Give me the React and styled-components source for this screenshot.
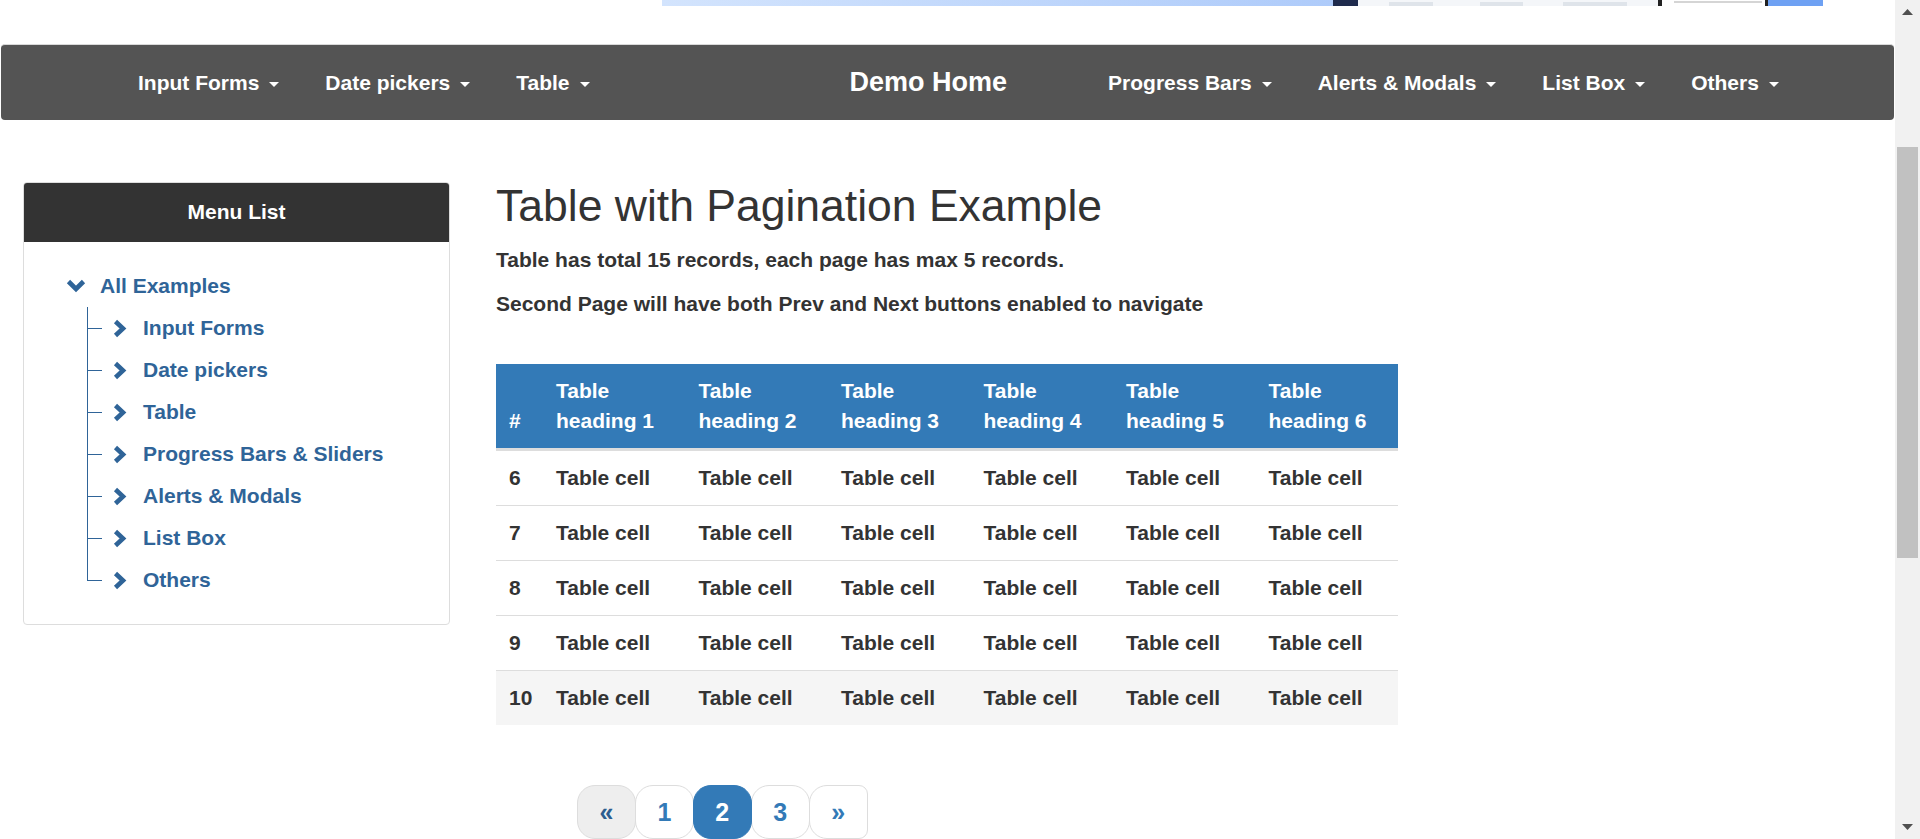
import React from 'react';
import styled, { createGlobalStyle } from 'styled-components';

const GlobalStyle = createGlobalStyle`
    html, body {
        margin: 0;
        padding: 0;
        overflow: hidden;
    }
    body {
        font-family: "Liberation Sans", Arial, Helvetica, sans-serif;
        color: #333;
        background: #fff;
    }
    * {
        box-sizing: border-box;
    }
`;

const Page = styled.div`
    display: flex;
    width: 1920px;
    height: 839px;
    overflow: hidden;
`;

const Main = styled.div`
    width: 1895px;
    height: 839px;
    overflow: hidden;
`;

const BannerStrip = styled.svg`
    display: block;
    margin-left: 662px;
`;

const Navbar = styled.nav`
    display: flex;
    align-items: stretch;
    margin: 38px 0 0 1px;
    width: 1893px;
    height: 76px;
    border-top: 1px solid #d9d9d9;
    border-radius: 4px;
    background: #545454;
`;

const NavGroup = styled.ul`
    display: flex;
    margin: 0;
    padding: 0;
    padding-left: ${p => p.$offset}px;
    list-style: none;
`;

const NavItem = styled.li`
    display: flex;
    align-items: center;
    padding: 0 23px;
    font-size: 21px;
    font-weight: bold;
    color: #fff;
    white-space: nowrap;
`;

const Caret = styled.span`
    display: inline-block;
    width: 0;
    height: 0;
    margin: 3px 0 0 10px;
    border-top: 5px solid #fff;
    border-left: 5px solid transparent;
    border-right: 5px solid transparent;
`;

const Brand = styled.div`
    display: flex;
    align-items: center;
    margin-left: 237px;
    margin-right: 78px;
    font-size: 27px;
    font-weight: bold;
    color: #fff;
    white-space: nowrap;
`;

const Content = styled.div`
    display: flex;
    align-items: flex-start;
    padding: 61px 0 0 23px;
`;

const Panel = styled.div`
    width: 427px;
    margin-top: 1px;
    border: 1px solid #ddd;
    border-radius: 4px;
    overflow: hidden;
`;

const PanelHeader = styled.div`
    height: 60px;
    margin: -1px -1px 0;
    display: flex;
    align-items: center;
    justify-content: center;
    background: #333;
    color: #fff;
    font-size: 21px;
    font-weight: bold;
    border-radius: 4px 4px 0 0;
`;

const Tree = styled.ul`
    margin: 0;
    padding: 23px 0 23px 42px;
    list-style: none;
`;

const TreeRoot = styled.li`
    color: #2f6498;
    font-size: 21px;
    font-weight: bold;
`;

const TreeLabel = styled.div`
    display: flex;
    align-items: center;
    height: 42px;
    gap: ${p => p.$gap}px;
    white-space: nowrap;
`;

const SubTree = styled.ul`
    margin: 0 0 0 21px;
    padding: 0;
    list-style: none;
`;

const Leaf = styled.li`
    position: relative;
    padding-left: 26px;

    &::before {
        content: '';
        position: absolute;
        left: 0;
        top: 0;
        height: ${p => (p.$last ? '50%' : '100%')};
        border-left: 1px solid #2f6498;
    }

    &::after {
        content: '';
        position: absolute;
        left: 0;
        top: 50%;
        width: 15px;
        border-top: 1px solid #2f6498;
    }
`;

const Article = styled.section`
    margin-left: 46px;
    width: 902px;
`;

const Title = styled.h1`
    margin: 0 0 15px;
    font-size: 44.5px;
    line-height: 49px;
    font-weight: normal;
    color: #333;
    white-space: nowrap;
`;

const Note = styled.p`
    margin: 0 0 14px;
    font-size: 21px;
    line-height: 30px;
    font-weight: bold;
    white-space: nowrap;
`;

const Table = styled.table`
    margin-top: 45px;
    width: 902px;
    table-layout: fixed;
    border-collapse: separate;
    border-spacing: 0;
    font-size: 21px;
    line-height: 30px;
    font-weight: bold;
`;

const Th = styled.th`
    padding: 12px 13px 12px;
    background: #337ab7;
    color: #fff;
    text-align: left;
    vertical-align: bottom;
    border-bottom: 3px solid #ddd;
`;

const Row = styled.tr`
    background: ${p => (p.$shade ? '#f5f5f5' : 'transparent')};
`;

const Td = styled.td`
    padding: 12px 13px;
    border-top: ${p => (p.$first ? '0' : '1px solid #ddd')};
    white-space: nowrap;
    color: #333;
`;

const Pager = styled.ul`
    display: flex;
    margin: 60px 0 0 81px;
    padding: 0;
    list-style: none;
`;

const PageLink = styled.li`
    position: relative;
    z-index: ${p => (p.$active ? 2 : 1)};
    margin-left: ${p => (p.$first ? '0' : '-1px')};
    padding: 11px 21.5px;
    font-size: 25px;
    line-height: 30px;
    font-weight: bold;
    border: 1px solid ${p => (p.$active ? '#337ab7' : '#ddd')};
    border-radius: ${p => (p.$end ? '18px 9px 9px 18px' : '18px')};
    background: ${p => (p.$active ? '#337ab7' : p.$muted ? '#eee' : '#fff')};
    color: ${p => (p.$active ? '#fff' : p.$muted ? '#2c5d8f' : '#337ab7')};
`;

const ScrollTrack = styled.div`
    display: flex;
    flex-direction: column;
    align-items: center;
    width: 25px;
    height: 839px;
    background: #f1f1f1;
`;

const ScrollButton = styled.div`
    display: flex;
    align-items: center;
    justify-content: center;
    width: 25px;
    height: 24px;
`;

const Thumb = styled.div`
    width: 21px;
    height: 411px;
    margin-top: 123px;
    background: #c1c1c1;
`;

const Spacer = styled.div`
    flex: 1;
`;

const ChevronRight = () => (
    <svg width="14" height="19" viewBox="0 0 14 19">
        <polyline points="2.5,2.5 10,9.5 2.5,16.5" fill="none" stroke="#2f6498" strokeWidth="4.6" strokeLinejoin="miter" />
    </svg>
);

const ChevronDown = () => (
    <svg width="20" height="14" viewBox="0 0 20 14">
        <polyline points="2.5,2.5 10,10 17.5,2.5" fill="none" stroke="#2f6498" strokeWidth="4.6" strokeLinejoin="miter" />
    </svg>
);

const Banner = () => (
    <BannerStrip width="1161" height="6" viewBox="0 0 1161 6">
        <defs>
            <linearGradient id="bannerSky" x1="0" x2="1" y1="0" y2="0">
                <stop offset="0" stopColor="#d3e4fd" />
                <stop offset="1" stopColor="#aecbfa" />
            </linearGradient>
        </defs>
        <rect x="0" y="0" width="671" height="6" fill="url(#bannerSky)" />
        <rect x="671" y="0" width="25" height="6" fill="#1f2b4d" />
        <rect x="696" y="0" width="300" height="6" fill="#f4f6f9" />
        <rect x="727" y="2" width="44" height="4" fill="#dfe4ea" />
        <rect x="818" y="2" width="43" height="4" fill="#dfe4ea" />
        <rect x="901" y="2" width="64" height="4" fill="#dfe4ea" />
        <rect x="996" y="0" width="4" height="6" fill="#222" />
        <rect x="1000" y="0" width="103" height="6" fill="#fff" />
        <rect x="1012" y="1" width="88" height="2" fill="#d5d5d5" />
        <rect x="1103" y="0" width="3" height="6" fill="#222" />
        <rect x="1106" y="0" width="55" height="6" fill="#6ea1f3" />
    </BannerStrip>
);

const leftMenu = ['Input Forms', 'Date pickers', 'Table'];
const rightMenu = ['Progress Bars', 'Alerts & Modals', 'List Box', 'Others'];
const treeItems = ['Input Forms', 'Date pickers', 'Table', 'Progress Bars & Sliders', 'Alerts & Modals', 'List Box', 'Others'];
const rows = [6, 7, 8, 9, 10];

const App = () => {
    return (
        <Page>
            <GlobalStyle />
            <Main>
                <Banner />
                <Navbar>
                    <NavGroup $offset={114}>
                        {leftMenu.map(item => (
                            <NavItem key={item}>{item}<Caret /></NavItem>
                        ))}
                    </NavGroup>
                    <Brand>Demo Home</Brand>
                    <NavGroup $offset={0}>
                        {rightMenu.map(item => (
                            <NavItem key={item}>{item}<Caret /></NavItem>
                        ))}
                    </NavGroup>
                </Navbar>

                <Content>
                    <Panel>
                        <PanelHeader>Menu List</PanelHeader>
                        <Tree>
                            <TreeRoot>
                                <TreeLabel $gap={14}><ChevronDown />All Examples</TreeLabel>
                                <SubTree>
                                    {treeItems.map((item, i) => (
                                        <Leaf key={item} $last={i === treeItems.length - 1}>
                                            <TreeLabel $gap={16}><ChevronRight />{item}</TreeLabel>
                                        </Leaf>
                                    ))}
                                </SubTree>
                            </TreeRoot>
                        </Tree>
                    </Panel>

                    <Article>
                        <Title>Table with Pagination Example</Title>
                        <Note>Table has total 15 records, each page has max 5 records.</Note>
                        <Note>Second Page will have both Prev and Next buttons enabled to navigate</Note>
                        <Table>
                            <colgroup>
                                <col style={{ width: 47 }} />
                                <col /><col /><col /><col /><col /><col />
                            </colgroup>
                            <thead>
                                <tr>
                                    <Th>#</Th>
                                    {[1, 2, 3, 4, 5, 6].map(n => (
                                        <Th key={n}>Table heading {n}</Th>
                                    ))}
                                </tr>
                            </thead>
                            <tbody>
                                {rows.map((r, i) => (
                                    <Row key={r} $shade={r === 10}>
                                        <Td $first={i === 0}>{r}</Td>
                                        {[1, 2, 3, 4, 5, 6].map(n => (
                                            <Td key={n} $first={i === 0}>Table cell</Td>
                                        ))}
                                    </Row>
                                ))}
                            </tbody>
                        </Table>
                        <Pager>
                            <PageLink $first $muted>«</PageLink>
                            <PageLink>1</PageLink>
                            <PageLink $active>2</PageLink>
                            <PageLink>3</PageLink>
                            <PageLink $end>»</PageLink>
                        </Pager>
                    </Article>
                </Content>
            </Main>

            <ScrollTrack>
                <ScrollButton>
                    <svg width="11" height="6" viewBox="0 0 11 6"><polygon points="0,6 5.5,0 11,6" fill="#505050" /></svg>
                </ScrollButton>
                <Thumb />
                <Spacer />
                <ScrollButton>
                    <svg width="11" height="6" viewBox="0 0 11 6"><polygon points="0,0 5.5,6 11,0" fill="#505050" /></svg>
                </ScrollButton>
            </ScrollTrack>
        </Page>
    );
};

export default App;
